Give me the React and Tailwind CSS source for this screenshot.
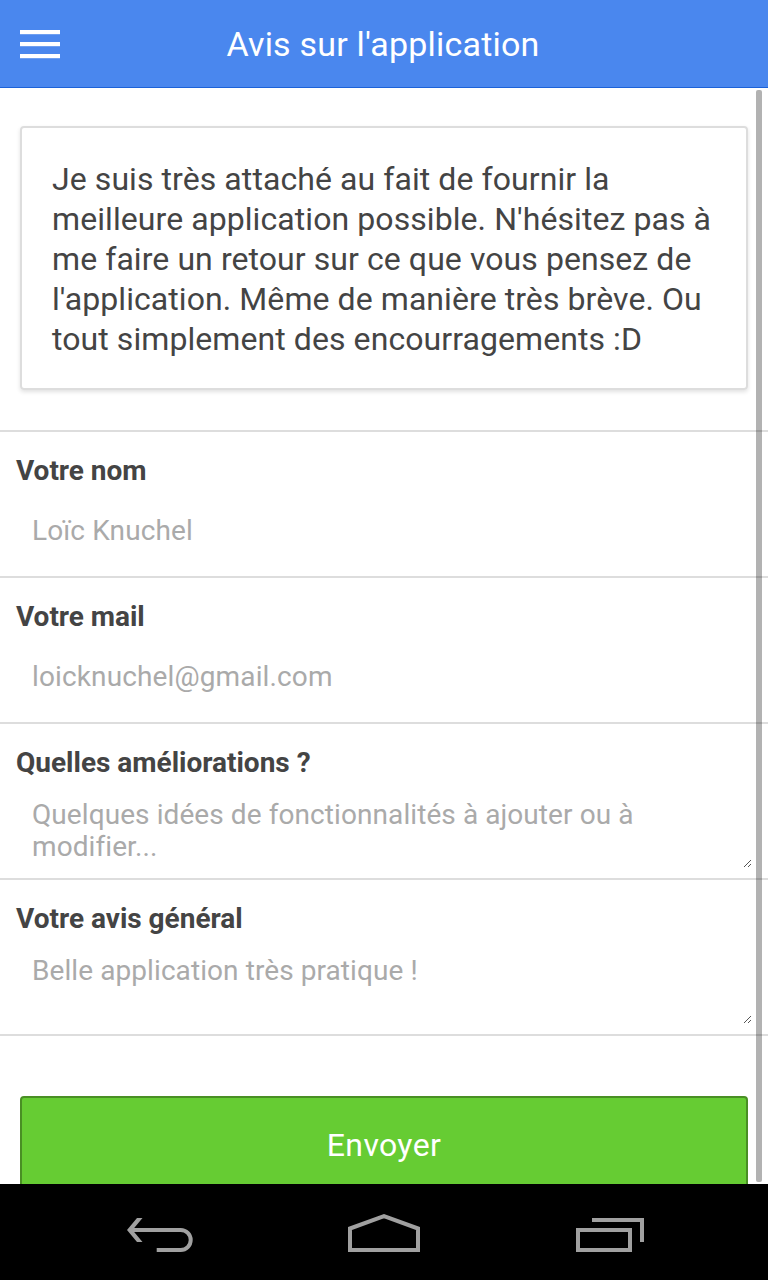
const message = [
  "Je suis très attaché au fait de fournir la",
  "meilleure application possible. N'hésitez pas à",
  "me faire un retour sur ce que vous pensez de",
  "l'application. Même de manière très brève. Ou",
  'tout simplement des encourragements :D',
];

function Field({ label, value }) {
  return (
    <div className="h-[146px] border-b-2 border-[#ddd] pt-[19px]">
      <div className="pl-4 text-[28px] leading-10 font-bold tracking-[-0.04px]">{label}</div>
      <div className="mt-5 pl-8 text-[28px] leading-10 tracking-[0.13px] text-[#aaa]">{value}</div>
    </div>
  );
}

function AreaField({ label, lines }) {
  return (
    <div className="relative h-[156px] border-b-2 border-[#ddd] pt-[19px]">
      <div className="pl-4 text-[28px] leading-10 font-bold tracking-[-0.01px]">{label}</div>
      <div className="mt-4 pl-8 text-[28px] leading-8 tracking-[0.08px] text-[#aaa]">
        {lines.map((line) => (
          <div key={line} className="whitespace-nowrap">{line}</div>
        ))}
      </div>
      <svg className="absolute right-4 bottom-[11px]" width="8" height="7" viewBox="0 0 8 7" fill="none" stroke="#555" shapeRendering="crispEdges">
        <path d="M0 7L7 0M4 7L7 4" />
      </svg>
    </div>
  );
}

export default function App() {
  return (
    <div className="flex h-[1280px] w-[768px] flex-col overflow-hidden bg-white font-[Roboto,sans-serif] text-[#444]">
      <header className="grid h-22 shrink-0 grid-cols-[100px_1fr_100px] items-center border-b border-[#1c62d8] bg-[#4a87ee] text-white">
        <div className="ml-5 flex w-10 flex-col gap-2">
          <span className="h-1 bg-white shadow-[0_1px_0_rgba(255,255,255,0.2)]" />
          <span className="h-1 bg-white shadow-[0_1px_0_rgba(255,255,255,0.2)]" />
          <span className="h-1 bg-white shadow-[0_1px_0_rgba(255,255,255,0.2)]" />
        </div>
        <h1 className="pt-0.5 pr-[2px] text-center text-[34px] tracking-[0.2px] whitespace-nowrap">Avis sur l'application</h1>
      </header>

      <main className="relative min-h-0 flex-1 overflow-hidden">
        <div className="mx-5 mt-[38px] h-[264px] rounded border-2 border-[#ddd] pt-[31px] pl-[30px] text-[32px] leading-10 tracking-[0.075px] shadow-[0_2px_4px_rgba(0,0,0,0.12)]">
          {message.map((line) => (
            <div key={line} className="whitespace-nowrap">{line}</div>
          ))}
        </div>
        <form className="mt-10 border-t-2 border-[#ddd]">
          <Field label="Votre nom" value="Loïc Knuchel" />
          <Field label="Votre mail" value="loicknuchel@gmail.com" />
          <AreaField label="Quelles améliorations ?" lines={['Quelques idées de fonctionnalités à ajouter ou à', 'modifier...']} />
          <AreaField label="Votre avis général" lines={['Belle application très pratique !']} />
        </form>
        <div className="mx-5 mt-[60px]">
          <button type="button" className="block h-[104px] w-full rounded border-2 border-[#498f24] bg-[#66cc33] pb-1.5 text-[32px] tracking-[0.35px] text-white">
            Envoyer
          </button>
        </div>
        <div className="absolute top-0.5 right-1.5 bottom-0.5 w-1.5 rounded-[2px] bg-black/30" />
      </main>

      <nav className="h-24 shrink-0 bg-black">
        <svg width="768" height="96" viewBox="0 0 768 96" fill="none" stroke="#a0a0a0" strokeWidth="4">
          <path d="M156.700 66H180.700A10 10 0 0 0 180.700 46H131" />
          <path d="M127 46L137 34H142.500L132.500 46L142.500 58H137Z" fill="#a0a0a0" stroke="none" />
          <path d="M350 66V44.500L384 32.200L418 44.500V66Z" />
          <path d="M578 46H630V66H578ZM592 36H642V58" />
        </svg>
      </nav>
    </div>
  );
}
